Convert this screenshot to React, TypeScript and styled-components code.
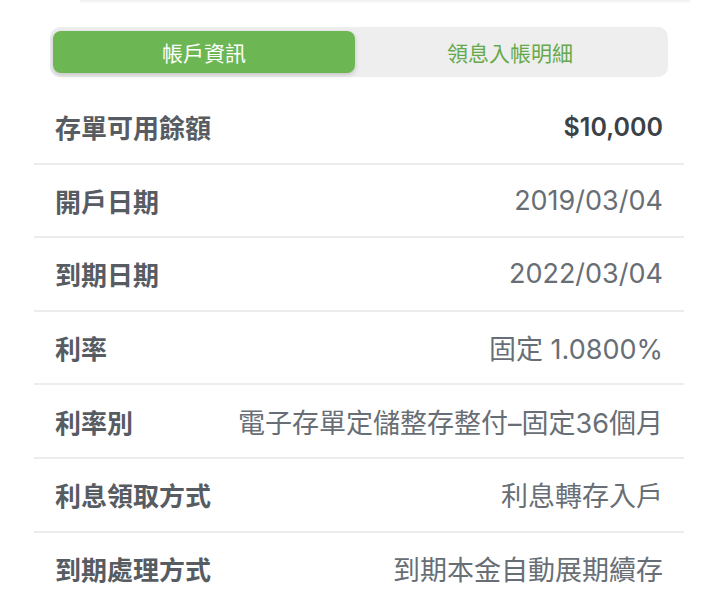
import styled, { createGlobalStyle } from 'styled-components';

const GlobalStyle = createGlobalStyle`
  body {
    margin: 0;
    background: #ffffff;
    font-family: Inter, 'Noto Sans CJK TC', sans-serif;
  }
`;

const rows = [
  { label: '存單可用餘額', value: '$10,000', strong: true },
  { label: '開戶日期', value: '2019/03/04' },
  { label: '到期日期', value: '2022/03/04' },
  { label: '利率', value: '固定 1.0800%' },
  { label: '利率別', value: '電子存單定儲整存整付–固定36個月' },
  { label: '利息領取方式', value: '利息轉存入戶' },
  { label: '到期處理方式', value: '到期本金自動展期續存' },
];

export default function App() {
  return (
    <Page>
      <GlobalStyle />
      <CardEdge />
      <Segmented>
        <Tab active>帳戶資訊</Tab>
        <Tab>領息入帳明細</Tab>
      </Segmented>
      <List>
        {rows.map((row) => (
          <Row key={row.label}>
            <Label>{row.label}</Label>
            <Value strong={row.strong}>{row.value}</Value>
          </Row>
        ))}
      </List>
    </Page>
  );
}

const Page = styled.div`
  width: 720px;
  height: 598px;
  overflow: hidden;
  background: #ffffff;
`;

const CardEdge = styled.div`
  height: 2px;
  margin: 0 30px 0 80px;
  background: #f3f3f3;
  box-shadow: 0 1px 3px rgba(0, 0, 0, 0.03);
`;

const Segmented = styled.div`
  display: grid;
  grid-template-columns: 302px 1fr;
  height: 50px;
  box-sizing: border-box;
  margin: 25px 52px 14px 50px;
  padding: 4px 3px;
  border-radius: 10px;
  background: #eeeeee;
`;

const Tab = styled.div<{ active?: boolean }>`
  display: flex;
  align-items: center;
  justify-content: center;
  padding-bottom: 1px;
  border-radius: 8px;
  font-family: 'Noto Sans CJK TC', sans-serif;
  font-size: 21px;
  color: ${(p) => (p.active ? '#ffffff' : '#66a94b')};
  background: ${(p) => (p.active ? '#6cb753' : 'transparent')};
  box-shadow: ${(p) => (p.active ? '0 2px 5px rgba(0, 0, 0, 0.18)' : 'none')};
`;

const List = styled.div`
  display: flex;
  flex-direction: column;
  margin: 0 36px 0 34px;
`;

const Row = styled.div`
  display: flex;
  align-items: center;
  justify-content: space-between;
  height: 73.6px;
  box-sizing: border-box;
  padding: 0 21px;
  border-bottom: 2px solid #ececec;
`;

const Label = styled.div`
  font-family: 'Noto Sans CJK TC', sans-serif;
  font-size: 26px;
  font-weight: 700;
  color: #575c62;
`;

const Value = styled.div<{ strong?: boolean }>`
  font-family: Inter, 'Noto Sans CJK TC', sans-serif;
  font-size: ${(p) => (p.strong ? '25px' : '27px')};
  font-weight: ${(p) => (p.strong ? 600 : 400)};
  color: ${(p) => (p.strong ? '#3b4147' : '#686e75')};
`;
